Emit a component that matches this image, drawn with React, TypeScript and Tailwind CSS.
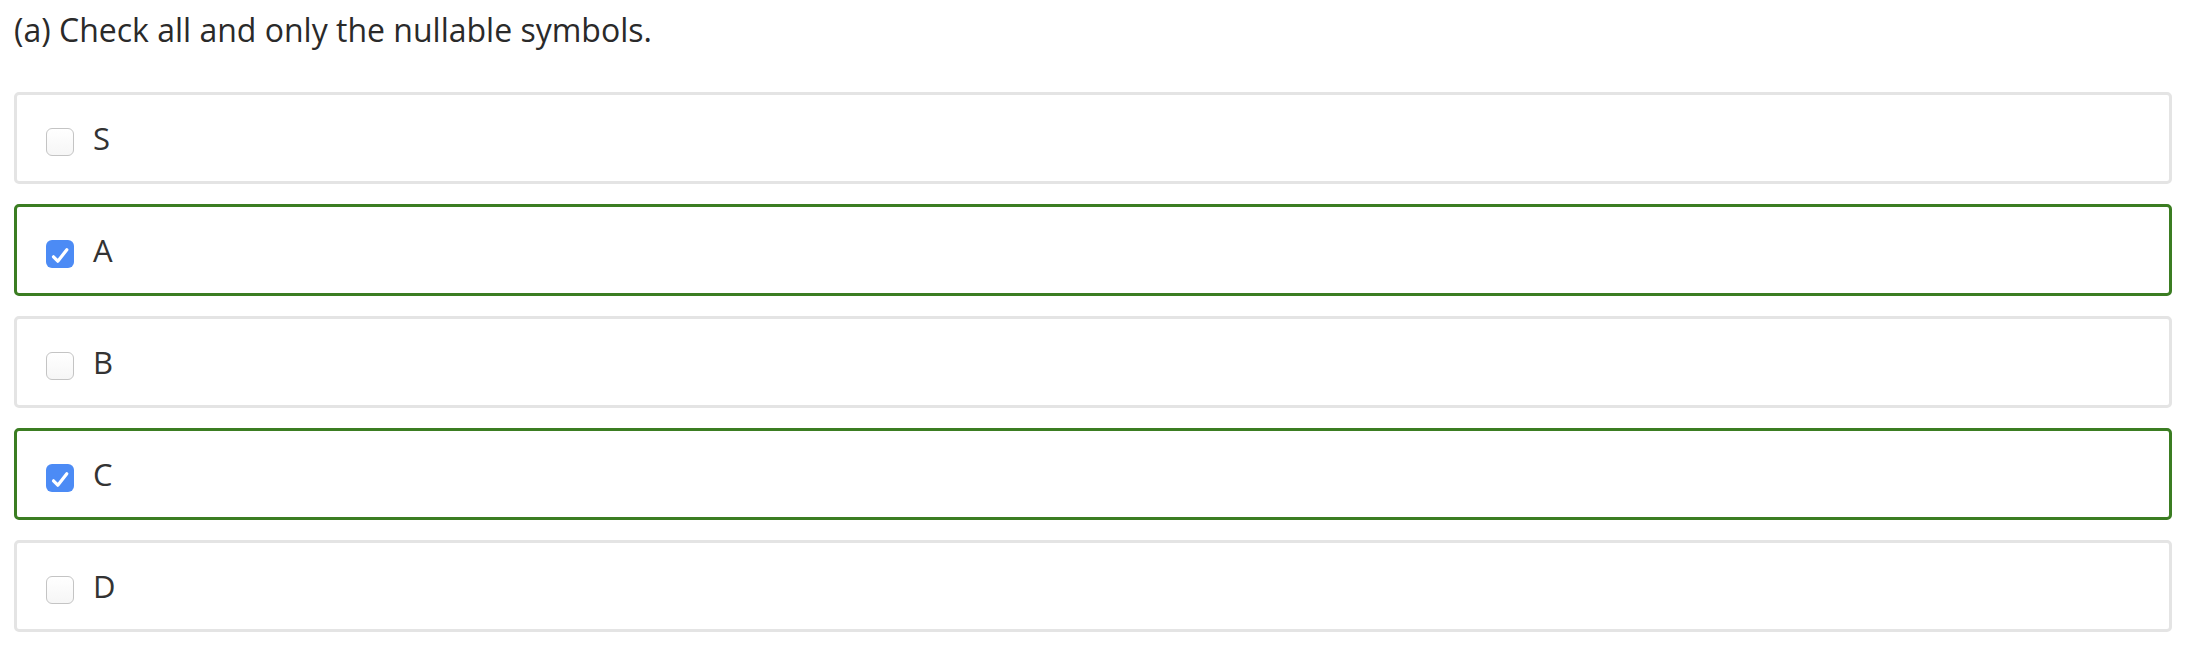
import React from "react";

const options = [
  { label: "S", checked: false },
  { label: "A", checked: true },
  { label: "B", checked: false },
  { label: "C", checked: true },
  { label: "D", checked: false },
];

function Box({ checked }: { checked: boolean }) {
  if (checked) {
    return (
      <span className="mt-[8px] flex h-[28px] w-[28px] shrink-0 items-center justify-center rounded-[6px] bg-[#4c8bf5]">
        <svg width="28" height="28" viewBox="0 0 28 28" fill="none">
          <path
            d="M7.5 16.8 L11.8 21.2 L20.8 9.8"
            stroke="#ffffff"
            strokeWidth="3.2"
            strokeLinecap="round"
            strokeLinejoin="round"
          />
        </svg>
      </span>
    );
  }
  return (
    <span className="mt-[8px] block h-[28px] w-[28px] shrink-0 rounded-[6px] border border-[#c4c4c4] bg-gradient-to-b from-white to-[#f6f6f6]" />
  );
}

export default function App() {
  return (
    <div
      className="h-[646px] overflow-hidden bg-white px-[14px] pt-[10px] text-[#333333]"
      style={{ fontFamily: '"Open Sans", "Noto Sans", sans-serif' }}
    >
      <div className="text-[32px] leading-[40px] text-[#2a2a2a]">
        (a) Check all and only the nullable symbols.
      </div>
      <div className="mt-[42px] flex flex-col gap-[20px]">
        {options.map((o) => (
          <div
            key={o.label}
            className={`flex h-[92px] items-center rounded-[5px] border-[3px] bg-white pl-[29px] ${
              o.checked ? "border-[#3b7d22]" : "border-[#e4e4e4]"
            }`}
          >
            <Box checked={o.checked} />
            <span className="ml-[19px] text-[31px] leading-normal text-[#333333]">
              {o.label}
            </span>
          </div>
        ))}
      </div>
    </div>
  );
}
